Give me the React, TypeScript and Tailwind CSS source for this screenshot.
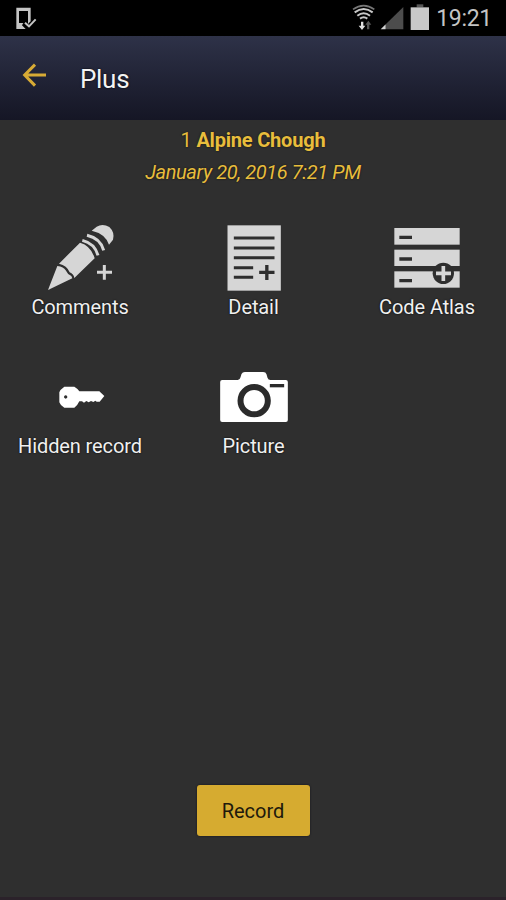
import type { ReactNode } from 'react'

function Icon({ viewBox, children }: { viewBox: string; children: ReactNode }) {
  return (
    <svg viewBox={viewBox} className="w-[72px] h-[72px]">
      {children}
    </svg>
  )
}

function CommentsIcon() {
  return (
    <Icon viewBox="72 21 216 216">
      <g fill="#d6d6d6">
        <path d="M84 225 L112 153 Q131 155 137 166 Q142 178 154 183 L157 190 Z" />
        <path d="M117 146 L180 83 Q213 92 224 130 L163 189 Q161 177 149 172 Q141 151 117 146 Z" />
        <path d="M215 47 L230 35 Q248 25 268 36 Q285 52 279 74 L267 89 Q256 56 215 47 Z" />
      </g>
      <g fill="none" stroke="#d6d6d6" strokeWidth="9">
        <path d="M187 76 Q224 85 234 121" />
        <path d="M201 61 Q241 70 251 106" />
      </g>
      <path d="M253 150 V194 M231 172 H276" stroke="#d6d6d6" strokeWidth="9" />
    </Icon>
  )
}

function DetailIcon() {
  return (
    <Icon viewBox="22.5 21 216 216">
      <rect x="51" y="31" width="160" height="196" fill="#d6d6d6" />
      <path
        d="M70 69 H192 M70 99 H192 M70 128 H192 M70 158 H128 M70 187 H128"
        stroke="#2e2e2e"
        strokeWidth="9"
      />
      <path d="M169 150 V195 M146 172 H192" stroke="#2e2e2e" strokeWidth="10" />
    </Icon>
  )
}

function AtlasIcon() {
  return (
    <Icon viewBox="63 21 216 216">
      <g fill="#d6d6d6">
        <rect x="73" y="39" width="196" height="50" />
        <rect x="73" y="104" width="196" height="49" />
        <rect x="73" y="169" width="196" height="49" />
      </g>
      <path d="M88 67 H126 M88 132 H126 M88 197 H126" stroke="#2e2e2e" strokeWidth="10" />
      <circle cx="220" cy="175" r="32" fill="#2e2e2e" />
      <path d="M220 153 V198 M198 175 H243" stroke="#d6d6d6" strokeWidth="11" />
    </Icon>
  )
}

function KeyIcon() {
  return (
    <Icon viewBox="102 -12 216 216">
      <path
        fillRule="evenodd"
        fill="#fff"
        d="M163 65 H193 Q202 70 208 79 H268 L283 93 L269 110 H260 L256 107 L250 111 L243 108 L236 112 L229 108 L222 113 L216 109 H208 Q203 121 193 128 H163 Q150 120 148 112 V82 Q151 73 163 65 Z M167 91 a5 5 0 1 0 0.1 0 Z"
      />
    </Icon>
  )
}

function CameraIcon() {
  return (
    <Icon viewBox="37.5 -12 216 216">
      <path
        fill="#fff"
        d="M50 45 H97 Q104 44 105 37 L108 27 Q111 21 118 21 H173 Q181 21 183 28 L186 38 Q188 45 195 45 H241 Q247 45 247 51 V165 Q247 171 241 171 H50 Q44 171 44 165 V51 Q44 45 50 45 Z"
      />
      <circle cx="146" cy="107" r="41" fill="#fff" stroke="#2b2b2b" strokeWidth="18" />
      <path d="M193 62 H236" stroke="#2b2b2b" strokeWidth="10" />
    </Icon>
  )
}

const actions = [
  { label: 'Comments', icon: <CommentsIcon /> },
  { label: 'Detail', icon: <DetailIcon /> },
  { label: 'Code Atlas', icon: <AtlasIcon /> },
  { label: 'Hidden record', icon: <KeyIcon /> },
  { label: 'Picture', icon: <CameraIcon /> },
]

function StatusBar() {
  return (
    <div className="h-9 shrink-0 bg-black flex items-center justify-between pl-4 pr-[14px]">
      <svg viewBox="48 0 66 108" className="w-[22px] h-9">
        <path
          d="M49 23 H92 V64 L84 72 V33 H57 V69 H70 L66 76 L77 87 H49 Z"
          fill="#c4c4c4"
        />
        <path d="M75 68 L87 79 L107 58" fill="none" stroke="#c4c4c4" strokeWidth="6" />
      </svg>
      <div className="flex items-center">
        <svg viewBox="35 0 240 108" className="w-20 h-9">
          <g fill="none" stroke="#c8c8c8" strokeWidth="6">
            <path d="M38 28 Q70 6 102 28" stroke="#777" strokeWidth="5" />
            <path d="M43 37 Q70 17 97 37" />
            <path d="M51 47 Q70 32 89 47" />
            <path d="M59 56 Q70 48 81 56" />
          </g>
          <path d="M62 65 H69 V77 H75 L65 90 L55 77 H62 Z" fill="#e0e0e0" />
          <path d="M80 88 V74 H75 L84 62 L93 74 H87 V88 Z" fill="#555" />
          <path d="M189 21 V88 H137 V72 Z" fill="#4c4c4c" />
          <path d="M136 73 V88 H121 Z" fill="#d5d5d5" />
          <rect x="229" y="13" width="20" height="9" fill="#555" />
          <rect x="211" y="22" width="55" height="68" fill="#c8c8c8" />
        </svg>
        <span className="ml-[4px] pt-[2px] text-[23px] leading-[34px] tracking-[-0.3px] text-[#c4c4c4]">
          19:21
        </span>
      </div>
    </div>
  )
}

export default function App() {
  return (
    <div className="w-[506px] h-[900px] overflow-hidden flex flex-col bg-[#2f2f2f] font-['Roboto',sans-serif] border-b-3 border-[#2b222a]">
      <StatusBar />

      <header className="h-[84px] shrink-0 flex items-center pl-[22px] bg-linear-to-b from-[#2e3248] to-[#151625]">
        <button className="mb-[6px]">
          <svg viewBox="66 186 78 78" className="w-[26px] h-[26px]">
            <path
              d="M138 225 H74 M105 194 L74 225 L105 257"
              fill="none"
              stroke="#d8ab35"
              strokeWidth="9"
            />
          </svg>
        </button>
        <h1 className="ml-[32px] mt-[1px] text-[26px] leading-8 tracking-[-0.3px] text-[#f3f3f3] [text-shadow:0_0_2px_#000]">
          Plus
        </h1>
      </header>

      <div className="flex flex-col items-center pt-1 text-xl leading-8 text-[#e8bd3c] [text-shadow:0_0_2px_#111]">
        <p className="tracking-[-0.2px]">
          1 <b>Alpine Chough</b>
        </p>
        <p className="italic tracking-[-0.38px]">January 20, 2016 7:21 PM</p>
      </div>

      <div className="mt-[34px] grid grid-cols-[160px_160px_160px] gap-x-[13.5px]">
        {actions.map((action) => (
          <button key={action.label} className="h-[139px] flex flex-col items-center">
            {action.icon}
            <span className="whitespace-nowrap text-xl leading-[26px] tracking-[-0.1px] text-[#f0f0f0] [text-shadow:0_0_2px_#000]">
              {action.label}
            </span>
          </button>
        ))}
      </div>

      <button className="mt-auto mb-[61px] self-center w-[113px] h-[51px] rounded-[3px] bg-[#d6ab30] text-xl text-[#1f1a0c] shadow-[0_0_2px_#101018]">
        Record
      </button>
    </div>
  )
}
